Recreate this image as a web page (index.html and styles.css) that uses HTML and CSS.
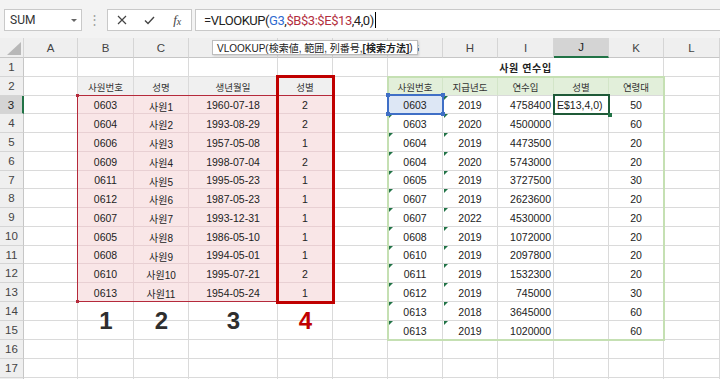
FILE: index.html
```html
<!DOCTYPE html>
<html lang="ko">

<head>
    <meta charset="UTF-8">
    <meta name="viewport" content="width=device-width, initial-scale=1.0">
    <title>VLOOKUP - 사원 연수입</title>
    <link rel="stylesheet" href="styles.css">
</head>

<body>
    <div class="toolbar">
        <div class="name-box"><span>SUM</span><span class="caret"></span></div>
        <div class="grip">⋮</div>
        <div class="fx-buttons">
            <span class="btn">
                <svg width="10" height="10" viewBox="0 0 10 10"><path d="M1 1 L9 9 M9 1 L1 9" stroke="#444" stroke-width="1.2" fill="none"/></svg>
            </span>
            <span class="btn">
                <svg width="11" height="9" viewBox="0 0 11 9"><path d="M1 4.5 L4 7.5 L10 1" stroke="#444" stroke-width="1.4" fill="none"/></svg>
            </span>
            <span class="btn fx"><i>f</i><i class="x">x</i></span>
        </div>
        <div class="formula">=VLOOKUP(<span class="ref-blue">G3</span>,<span class="ref-red">$B$3:$E$13</span>,4,0)<span class="cursor"></span></div>
    </div>

    <div class="sheet">
        <div class="grid">
            <!-- D, E, F letters sit under the tooltip -->
            <div class="row head"><div class="corner"></div><div>A</div><div>B</div><div>C</div><div></div><div></div><div></div><div>G</div><div>H</div><div>I</div><div class="on">J</div><div>K</div><div>L</div></div>
            <div class="row"><div class="rh">1</div><div></div><div></div><div></div><div></div><div></div><div></div><div class="title">사원 연수입</div><div></div></div>
            <div class="row"><div class="rh">2</div><div></div><div class="lh">사원번호</div><div class="lh">성명</div><div class="lh">생년월일</div><div class="lh">성별</div><div></div><div class="gh">사원번호</div><div class="gh">지급년도</div><div class="gh">연수입</div><div class="gh">성별</div><div class="gh">연령대</div><div></div></div>
            <div class="row"><div class="rh on">3</div><div></div><div class="p c">0603</div><div class="p nm">사원1</div><div class="p c">1960-07-18</div><div class="p c">2</div><div></div><div class="c sel">0603</div><div class="c t">2019</div><div class="r">4758400</div><div class="edit">E$13,4,0)</div><div class="c">50</div><div></div></div>
            <div class="row"><div class="rh">4</div><div></div><div class="p c">0604</div><div class="p nm">사원2</div><div class="p c">1993-08-29</div><div class="p c">2</div><div></div><div class="c t">0603</div><div class="c t">2020</div><div class="r">4500000</div><div></div><div class="c">60</div><div></div></div>
            <div class="row"><div class="rh">5</div><div></div><div class="p c">0606</div><div class="p nm">사원3</div><div class="p c">1957-05-08</div><div class="p c">1</div><div></div><div class="c t">0604</div><div class="c t">2019</div><div class="r">4473500</div><div></div><div class="c">20</div><div></div></div>
            <div class="row"><div class="rh">6</div><div></div><div class="p c">0609</div><div class="p nm">사원4</div><div class="p c">1998-07-04</div><div class="p c">2</div><div></div><div class="c t">0604</div><div class="c t">2020</div><div class="r">5743000</div><div></div><div class="c">20</div><div></div></div>
            <div class="row"><div class="rh">7</div><div></div><div class="p c">0611</div><div class="p nm">사원5</div><div class="p c">1995-05-23</div><div class="p c">1</div><div></div><div class="c t">0605</div><div class="c t">2019</div><div class="r">3727500</div><div></div><div class="c">30</div><div></div></div>
            <div class="row"><div class="rh">8</div><div></div><div class="p c">0612</div><div class="p nm">사원6</div><div class="p c">1987-05-23</div><div class="p c">1</div><div></div><div class="c t">0607</div><div class="c t">2019</div><div class="r">2623600</div><div></div><div class="c">20</div><div></div></div>
            <div class="row"><div class="rh">9</div><div></div><div class="p c">0607</div><div class="p nm">사원7</div><div class="p c">1993-12-31</div><div class="p c">1</div><div></div><div class="c t">0607</div><div class="c t">2022</div><div class="r">4530000</div><div></div><div class="c">20</div><div></div></div>
            <div class="row"><div class="rh">10</div><div></div><div class="p c">0605</div><div class="p nm">사원8</div><div class="p c">1986-05-10</div><div class="p c">1</div><div></div><div class="c t">0608</div><div class="c t">2019</div><div class="r">1072000</div><div></div><div class="c">20</div><div></div></div>
            <div class="row"><div class="rh">11</div><div></div><div class="p c">0608</div><div class="p nm">사원9</div><div class="p c">1994-05-01</div><div class="p c">1</div><div></div><div class="c t">0610</div><div class="c t">2019</div><div class="r">2097800</div><div></div><div class="c">20</div><div></div></div>
            <div class="row"><div class="rh">12</div><div></div><div class="p c">0610</div><div class="p nm">사원10</div><div class="p c">1995-07-21</div><div class="p c">2</div><div></div><div class="c t">0611</div><div class="c t">2019</div><div class="r">1532300</div><div></div><div class="c">20</div><div></div></div>
            <div class="row"><div class="rh">13</div><div></div><div class="p c">0613</div><div class="p nm">사원11</div><div class="p c">1954-05-24</div><div class="p c">1</div><div></div><div class="c t">0612</div><div class="c t">2019</div><div class="r">745000</div><div></div><div class="c">30</div><div></div></div>
            <div class="row"><div class="rh">14</div><div></div><div></div><div></div><div></div><div></div><div></div><div class="c t">0613</div><div class="c t">2018</div><div class="r">3645000</div><div></div><div class="c">60</div><div></div></div>
            <div class="row"><div class="rh">15</div><div></div><div></div><div></div><div></div><div></div><div></div><div class="c t">0613</div><div class="c t">2019</div><div class="r">1020000</div><div></div><div class="c">60</div><div></div></div>
            <div class="row"><div class="rh">16</div><div></div><div></div><div></div><div></div><div></div><div></div><div></div><div></div><div></div><div></div><div></div><div></div></div>
            <div class="row"><div class="rh">17</div><div></div><div></div><div></div><div></div><div></div><div></div><div></div><div></div><div></div><div></div><div></div><div></div></div>
            <div class="row"><div class="rh"></div><div></div><div></div><div></div><div></div><div></div><div></div><div></div><div></div><div></div><div></div><div></div><div></div></div>
        </div>

        <!-- highlight layer: same tracks as the grid -->
        <div class="marks">
            <div class="range-red"><span class="h h-tl"></span><span class="h h-bl"></span></div>
            <div class="box-e"></div>
            <div class="range-green"></div>
            <div class="range-blue"><span class="h h-tl"></span><span class="h h-tr"></span><span class="h h-bl"></span><span class="h h-br"></span></div>
            <div class="active"><span class="h h-br"></span></div>
            <div class="num n1">1</div>
            <div class="num n2">2</div>
            <div class="num n3">3</div>
            <div class="num n4">4</div>
        </div>

        <div class="tooltip">VLOOKUP(検索値, 範囲, 列番号, <b>[検索方法]</b>)</div>
    </div>
</body>

</html>
```

FILE: styles.css
```css
* {
    box-sizing: border-box;
}

body {
    margin: 0;
    width: 720px;
    height: 379px;
    overflow: hidden;
    background: #fff;
    color: #222;
    font-family: "Liberation Sans", "Noto Sans CJK KR", sans-serif;
}

/* formula bar */
.toolbar {
    height: 38px;
    padding-top: 9px;
    display: flex;
    align-items: flex-start;
    background: #f3f3f3;
}

.name-box {
    width: 78px;
    height: 22px;
    margin-left: 4px;
    padding: 0 4px 0 5px;
    display: flex;
    align-items: center;
    justify-content: space-between;
    background: #fff;
    border: 1px solid #c9c9c9;
    font-family: Roboto, sans-serif;
    font-size: 12px;
    color: #333;
}

.caret {
    border-left: 3px solid transparent;
    border-right: 3px solid transparent;
    border-top: 3px solid #666;
}

.grip {
    width: 25px;
    line-height: 22px;
    text-align: center;
    font-size: 13px;
    color: #a0a0a0;
}

.fx-buttons {
    width: 85px;
    height: 22px;
    display: flex;
    background: #fff;
    border: 1px solid #c9c9c9;
}

.btn {
    width: 28px;
    display: flex;
    align-items: center;
    justify-content: center;
}

.fx {
    font-family: "Liberation Serif", serif;
    color: #444;
    font-size: 13px;
}

.fx .x {
    font-size: 10px;
    margin-top: 3px;
}

.formula {
    flex: 1;
    height: 22px;
    margin-left: 3px;
    padding-left: 8px;
    display: flex;
    align-items: center;
    background: #fff;
    border: 1px solid #c9c9c9;
    border-right: none;
    font-family: Roboto, sans-serif;
    font-size: 13px;
    letter-spacing: -0.45px;
    color: #222;
}

.ref-blue {
    color: #2f6bd0;
}

.ref-red {
    color: #b3303f;
}

.cursor {
    width: 1px;
    height: 16px;
    margin-left: 1px;
    background: #000;
}

/* sheet */
.sheet {
    position: relative;
}

.grid,
.marks {
    display: grid;
    grid-template-columns: 24px 54px 56px 55px 89px 55px 55px 55px 55px 56px 55px 55px 56px;
    grid-template-rows: 20px 19px 19px 18px 19px 19px 19px 18px 19px 19px 19px 18px 19px 19px 19px 19px 19px 19px 19px;
}

.row {
    display: contents;
}

.row > * {
    position: relative;
    display: flex;
    align-items: center;
    padding: 1px 2px 0;
    border-right: 1px solid #dadada;
    border-bottom: 1px solid #dadada;
    font-size: 10.5px;
    white-space: nowrap;
}

.head > * {
    justify-content: center;
    padding: 0;
    background: #efefef;
    border-right-color: #d5d5d5;
    border-bottom-color: #c6c6c6;
    font-size: 11.5px;
    color: #444;
}

.head > .on {
    background: #d4d4d4;
    border-bottom: 2px solid #217346;
    color: #222;
}

.corner::after {
    content: "";
    position: absolute;
    right: 2px;
    bottom: 2px;
    border-left: 14px solid transparent;
    border-bottom: 13px solid #b8b8b8;
}

.rh {
    justify-content: center;
    padding: 0;
    background: #efefef;
    border-right-color: #c6c6c6;
    border-bottom-color: #d5d5d5;
    font-size: 11.5px;
    color: #444;
}

.rh.on {
    background: #d4d4d4;
    border-right: 2px solid #217346;
    color: #222;
}

.c {
    justify-content: center;
}

.r {
    justify-content: flex-end;
}

/* left table */
.lh {
    justify-content: center;
    background: #f0f0f0;
    font-size: 9.5px;
    color: #333;
}

.p {
    background: #f9e6e7;
    border-color: #e8d0d3;
}

.nm {
    justify-content: center;
    padding-top: 3px;
    font-size: 10px;
}

/* right table */
.title {
    grid-column: span 5;
    justify-content: center;
    font-weight: bold;
    font-size: 10px;
    letter-spacing: 0.6px;
}

.gh {
    justify-content: center;
    background: #e2efda;
    border-right-color: #d3e5c8;
    font-size: 9.5px;
    color: #333;
}

.sel {
    background: #dde7f5;
}

.t::before {
    content: "";
    position: absolute;
    left: 1px;
    top: 0;
    border-top: 4px solid #217346;
    border-right: 4px solid transparent;
}

.edit {
    padding-left: 3px;
}

/* highlight layer */
.marks {
    position: absolute;
    top: 0;
    left: 0;
    pointer-events: none;
}

.marks > div {
    position: relative;
}

.h {
    position: absolute;
    width: 4px;
    height: 4px;
    background: inherit;
}

.h-tl { left: -3px; top: -3px; }
.h-tr { right: -3px; top: -3px; }
.h-bl { left: -3px; bottom: -3px; }
.h-br { right: -3px; bottom: -3px; }

.range-red {
    grid-column: 3 / 7;
    grid-row: 4 / 15;
    margin: -1px 0 0 -1px;
    border: 1px solid #b52a3b;
}

.range-red .h {
    width: 3px;
    height: 3px;
    background: #b52a3b;
}

.range-red .h-tl { left: -2px; top: -2px; }
.range-red .h-bl { left: -2px; bottom: -2px; }

.box-e {
    grid-column: 6 / 7;
    grid-row: 3 / 15;
    margin: -2px;
    border: 3px solid #c00000;
}

.range-green {
    grid-column: 8 / 13;
    grid-row: 3 / 17;
    margin: -1px;
    border: 2px solid #c5e0b3;
}

.range-blue {
    grid-column: 8 / 9;
    grid-row: 4 / 5;
    margin: -2px -1px -1px -1px;
    border: 2px solid #3f6fc6;
}

.range-blue .h {
    background: #3f6fc6;
}

.active {
    grid-column: 11 / 12;
    grid-row: 4 / 5;
    margin: -2px -1px -1px -1px;
    border: 2px solid #1f5a38;
}

.active .h {
    background: #217346;
    right: -4px;
    bottom: -4px;
}

.num {
    grid-row: 15 / 17;
    display: flex;
    align-items: center;
    justify-content: center;
    font-weight: bold;
    font-size: 24px;
    color: #2e2e2e;
}

.n1 { grid-column: 3 / 4; }
.n2 { grid-column: 4 / 5; }
.n3 { grid-column: 5 / 6; }

.n4 {
    grid-column: 6 / 7;
    color: #c00000;
}

.tooltip {
    position: absolute;
    top: 2px;
    left: 212px;
    z-index: 2;
    height: 15px;
    padding: 0 4px;
    display: flex;
    align-items: center;
    background: #fff;
    border: 1px solid #bdbdbd;
    box-shadow: 1px 1px 2px rgba(0, 0, 0, 0.15);
    font-family: "Liberation Sans", "Noto Sans CJK JP", sans-serif;
    font-size: 10px;
    color: #222;
    white-space: nowrap;
}
```
